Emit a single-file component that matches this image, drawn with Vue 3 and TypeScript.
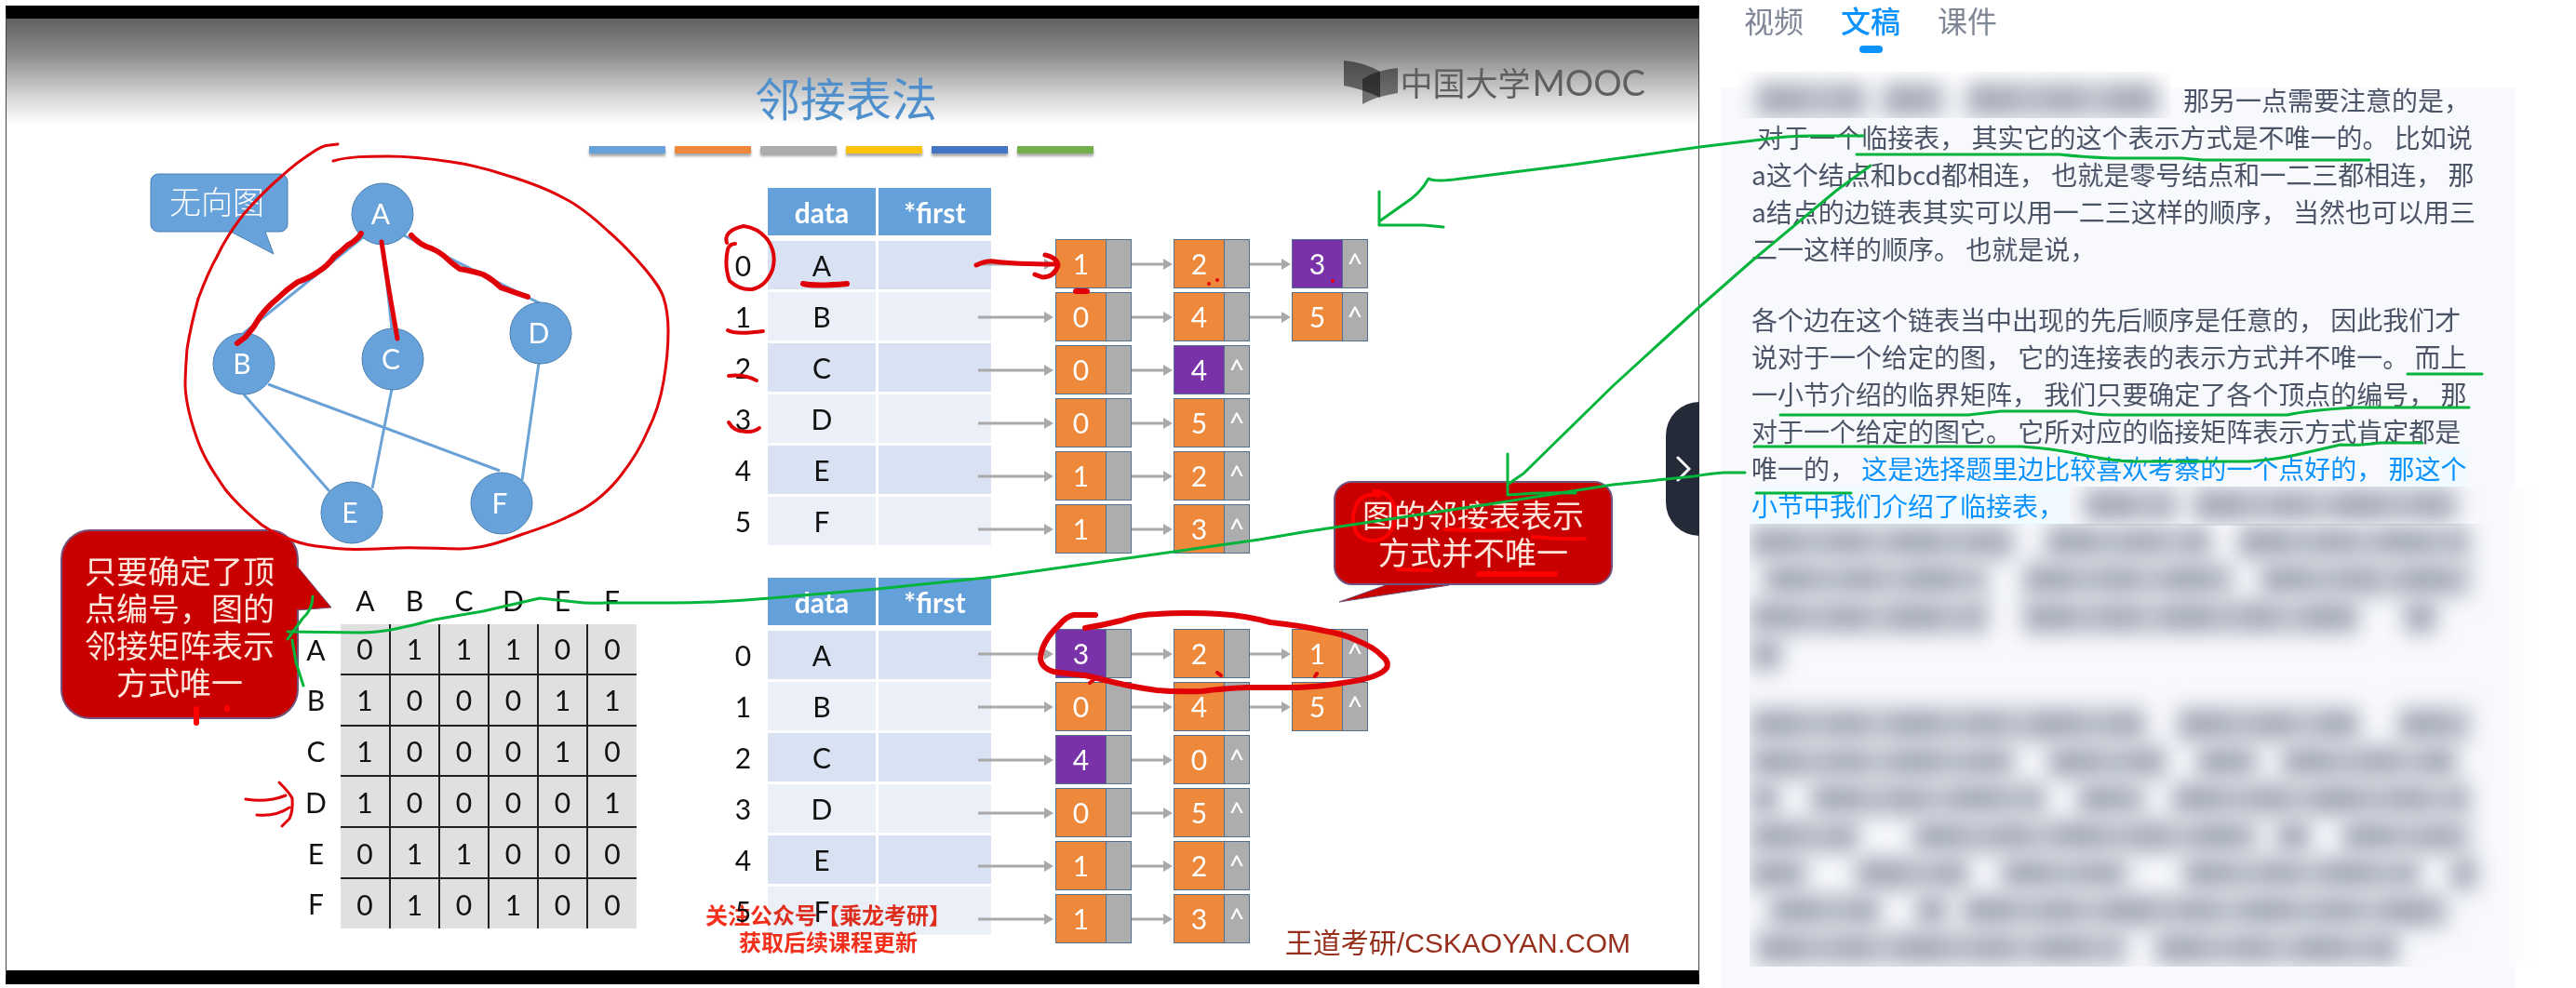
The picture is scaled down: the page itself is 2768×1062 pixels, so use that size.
<script setup lang="ts">
import { ref } from 'vue'

interface ListNode {
  value: number
  accent?: boolean
}
interface VertexRow {
  name: string
  chain: ListNode[]
}
interface GraphNode {
  name: string
  x: number
  y: number
}
type Segment = [gap: number, width: number]

const tabs = ['视频', '文稿', '课件']
const activeTab = ref('文稿')
const collapsed = ref(false)

const stripes = ['blue', 'orange', 'gray', 'yellow', 'navy', 'green']

const graphNodes: GraphNode[] = [
  { name: 'A', x: 404, y: 65 },
  { name: 'B', x: 255, y: 226 },
  { name: 'C', x: 415, y: 221 },
  { name: 'D', x: 574, y: 193 },
  { name: 'E', x: 371, y: 386 },
  { name: 'F', x: 532, y: 376 },
]
const graphEdges = [
  'M383 90 255 193', 'M404 97 414 188', 'M427 88 573 161', 'M255 259 347 363',
  'M281 248 530 341', 'M414 253 393 360', 'M572 225 554 351',
]

const vertices = ['A', 'B', 'C', 'D', 'E', 'F']
const matrix = [
  [0, 1, 1, 1, 0, 0],
  [1, 0, 0, 0, 1, 1],
  [1, 0, 0, 0, 1, 0],
  [1, 0, 0, 0, 0, 1],
  [0, 1, 1, 0, 0, 0],
  [0, 1, 0, 1, 0, 0],
]

const lists: VertexRow[][] = [
  [
    { name: 'A', chain: [{ value: 1 }, { value: 2 }, { value: 3, accent: true }] },
    { name: 'B', chain: [{ value: 0 }, { value: 4 }, { value: 5 }] },
    { name: 'C', chain: [{ value: 0 }, { value: 4, accent: true }] },
    { name: 'D', chain: [{ value: 0 }, { value: 5 }] },
    { name: 'E', chain: [{ value: 1 }, { value: 2 }] },
    { name: 'F', chain: [{ value: 1 }, { value: 3 }] },
  ],
  [
    { name: 'A', chain: [{ value: 3, accent: true }, { value: 2 }, { value: 1 }] },
    { name: 'B', chain: [{ value: 0 }, { value: 4 }, { value: 5 }] },
    { name: 'C', chain: [{ value: 4, accent: true }, { value: 0 }] },
    { name: 'D', chain: [{ value: 0 }, { value: 5 }] },
    { name: 'E', chain: [{ value: 1 }, { value: 2 }] },
    { name: 'F', chain: [{ value: 1 }, { value: 3 }] },
  ],
]

// Obscured transcript lines, stored as gap and width of each run of words.
const maskedHead: Segment[] = [[24, 112], [24, 60], [30, 200]]
const maskedTail: Segment[] = [[18, 94], [24, 278]]
const maskedParagraphs: Segment[][][] = [
  [
    [[2, 278], [39, 171], [36, 243]],
    [[17, 234], [44, 219], [36, 219]],
    [[2, 249], [44, 355], [54, 29]],
    [[2, 27]],
  ],
  [
    [[2, 418], [41, 189], [48, 71]],
    [[2, 278], [42, 121], [39, 59], [32, 181]],
    [[2, 24], [41, 246], [41, 66], [35, 314]],
    [[2, 110], [65, 364], [26, 30], [41, 131]],
    [[2, 54], [59, 115], [42, 130], [65, 248], [39, 23]],
    [[23, 112], [45, 27], [23, 515]],
    [[8, 391], [38, 255]],
  ],
]
const segStyle = (s: Segment) => ({ marginLeft: s[0] + 'px', width: s[1] + 'px' })
</script>

<template>
  <div class="page">
    <main class="slide">
      <header class="slide-head">
        <h1>邻接表法</h1>
        <div class="logo">
          <svg width="58" height="48" viewBox="0 0 58 48" aria-hidden="true">
            <path d="M0 0Q22 2 39 12V40Q22 31 0 27Z" fill="#000" fill-opacity=".5" />
            <path d="M58 8Q36 10 20 20V47Q36 38 58 35Z" fill="#000" fill-opacity=".48" />
          </svg>
          <span class="logo-cn">中国大学</span><span class="logo-en">MOOC</span>
        </div>
      </header>

      <div class="stripes">
        <i v-for="s in stripes" :key="s" :class="s"></i>
      </div>

      <div class="slide-body">
        <section class="left">
          <div class="graph">
            <svg width="760" height="404" aria-label="无向图">
              <path class="tag" d="M163 22H294a8 8 0 0 1 8 8V76a8 8 0 0 1-8 8H278L287 108 241 84H163a8 8 0 0 1-8-8V30a8 8 0 0 1 8-8Z" />
              <text class="tag-text" x="226" y="65">无向图</text>
              <path v-for="e in graphEdges" :key="e" class="edge" :d="e" />
              <g v-for="n in graphNodes" :key="n.name">
                <circle class="vertex" :cx="n.x" :cy="n.y" r="33" />
                <text class="vertex-text" :x="n.x - 2" :y="n.y + 11">{{ n.name }}</text>
              </g>
            </svg>
          </div>
          <div class="matrix-row">
            <p class="callout callout-left">
              <svg width="40" height="60" aria-hidden="true"><path d="M0 4 38 50 0 53" /></svg>
              只要确定了顶<br>点编号，图的<br>邻接矩阵表示<br>方式唯一
            </p>
            <table class="matrix">
              <thead>
                <tr><td></td><th v-for="v in vertices" :key="v" scope="col">{{ v }}</th></tr>
              </thead>
              <tbody>
                <tr v-for="(row, r) in matrix" :key="r">
                  <th scope="row">{{ vertices[r] }}</th>
                  <td v-for="(n, c) in row" :key="c">{{ n }}</td>
                </tr>
              </tbody>
            </table>
          </div>
        </section>

        <section class="middle">
          <div v-for="(list, l) in lists" :key="l" class="adjacency">
            <table class="heads">
              <thead>
                <tr><td class="blank"></td><th scope="col">data</th><th scope="col">*first</th></tr>
              </thead>
              <tbody>
                <tr v-for="(row, i) in list" :key="row.name">
                  <th scope="row">{{ i }}</th>
                  <td class="data">{{ row.name }}</td>
                  <td class="first"></td>
                </tr>
              </tbody>
            </table>
            <ul class="chains">
              <li v-for="row in list" :key="row.name">
                <template v-for="(n, k) in row.chain" :key="k">
                  <svg :width="k ? 45 : 87" height="12" aria-hidden="true">
                    <path v-if="k" d="M0 6H36" class="line" />
                    <path v-else d="M4 6H76" class="line" />
                    <path :d="k ? 'M34 0 44 6 34 12Z' : 'M75 0 85 6 75 12Z'" class="head" />
                  </svg>
                  <span class="cell" :class="{ accent: n.accent }">
                    <b>{{ n.value }}</b><i>{{ k === row.chain.length - 1 ? '^' : '' }}</i>
                  </span>
                </template>
              </li>
            </ul>
          </div>
        </section>
      </div>

      <p class="callout callout-right">
        <svg width="130" height="24" aria-hidden="true"><path d="M54 2 4 20 122 2" /></svg>
        图的邻接表表示<br>方式并不唯一
      </p>
      <p class="watermark">关注公众号【乘龙考研】<br>获取后续课程更新</p>
      <p class="brand">王道考研/CSKAOYAN.COM</p>

      <button class="toggle" type="button" aria-label="收起侧栏" :aria-expanded="!collapsed" @click="collapsed = !collapsed">
        <svg width="16" height="28" viewBox="0 0 16 28"><path d="M2 2 14 14 2 26" /></svg>
      </button>
    </main>

    <aside class="side">
      <nav class="tabs" role="tablist">
        <button v-for="t in tabs" :key="t" type="button" role="tab" :aria-selected="t === activeTab" :class="{ active: t === activeTab }" @click="activeTab = t">{{ t }}</button>
      </nav>
      <article class="transcript">
        <div class="line-row">
          <div class="mask mask-head" aria-hidden="true">
            <div class="mask-line"><i v-for="(s, i) in maskedHead" :key="i" :style="segStyle(s)"></i></div>
          </div>
          <span>那另一点需要注意的是，</span>
        </div>
        <p>&nbsp;对于一个临接表， 其实它的这个表示方式是不唯一的。 比如说<br>a这个结点和bcd都相连， 也就是零号结点和一二三都相连， 那<br>a结点的边链表其实可以用一二三这样的顺序， 当然也可以用三<br>二一这样的顺序。 也就是说，</p>
        <p class="second">各个边在这个链表当中出现的先后顺序是任意的， 因此我们才<br>说对于一个给定的图， 它的连接表的表示方式并不唯一。 而上<br>一小节介绍的临界矩阵， 我们只要确定了各个顶点的编号， 那<br>对于一个给定的图它。 它所对应的临接矩阵表示方式肯定都是<br>唯一的， <span class="spoken">这是选择题里边比较喜欢考察的一个点好的， <mark>那这个</mark></span></p>
        <div class="line-row">
          <mark class="current">小节中我们介绍了临接表，</mark>
          <div class="mask mask-tail" aria-hidden="true">
            <div class="mask-line"><i v-for="(s, i) in maskedTail" :key="i" :style="segStyle(s)"></i></div>
          </div>
        </div>
        <div class="mask mask-rest" aria-hidden="true">
          <div v-for="(p, i) in maskedParagraphs" :key="i" class="mask-par">
            <div v-for="(row, r) in p" :key="r" class="mask-line">
              <i v-for="(s, k) in row" :key="k" :style="segStyle(s)"></i>
            </div>
          </div>
        </div>
      </article>
    </aside>

    <!-- Lecturer's red pen -->
    <svg class="ink red" aria-hidden="true">
      <path d="M358 173C375 168 395 168 417 168C445 168 465 171 485 174C506 177 525 182 543 188C566 195 588 203 606 213C624 222 639 235 654 249C668 261 681 275 693 289C702 300 710 310 713 320C717 332 718 344 718 356C718 375 716 393 713 410C710 429 704 447 696 463C688 482 677 499 664 515C650 532 632 546 611 555C596 563 580 568 562 574C540 582 518 590 494 590C472 590 450 588 427 589C400 590 374 592 349 588C337 587 326 585 315 581C303 577 291 571 281 564C266 552 253 540 242 526C231 510 220 494 213 475C206 456 200 436 199 415C199 401 200 388 201 375C204 356 208 339 213 321C219 305 225 290 233 276C241 259 251 244 262 230C275 215 289 201 303 189C313 180 323 172 334 165C341 160 348 156 354 156L363 155" class="thin" />
      <path d="M388 251Q384 258 373 264Q367 270 359 276Q352 286 342 292Q332 299 320 303Q308 311 298 321Q287 330 279 341Q273 352 264 362L255 369" class="thick" />
      <path d="M410 260 417 306 427 364" class="mid" />
      <path d="M442 253Q449 261 458 265Q468 268 477 275Q485 283 494 289Q506 291 519 295Q529 300 538 309Q552 314 567 319" class="thick" />
      <path d="M211 762V777M244 761V762" class="thick bright" />
      <path d="M264 859Q287 863 307 855M276 876Q296 878 311 868M300 841Q311 852 314 858Q315 872 311 880L303 888" class="thin" />
      <path d="M781 261Q777 248 799 243Q815 245 825 258Q835 273 830 290Q823 308 808 311Q795 312 784 302Q778 286 782 268Q784 262 790 262" />
      <path d="M863 305Q876 308 910 305" class="thick" />
      <path d="M1049 285Q1060 280 1068 281Q1090 284 1134 284M1123 274Q1136 277 1137 285Q1133 298 1120 298L1112 295" class="mid" />
      <path d="M782 355Q790 360 820 356M783 404Q800 402 813 409M783 454Q789 465 804 464Q811 464 816 460" />
      <path d="M1156 313H1168" class="thick" />
      <path d="M1299 305V305M1308 301V301M1432 302V302M1308 723 1312 726M1413 727 1415 724M1171 734 1175 731" />
      <path d="M1166 675Q1185 672 1205 667Q1225 660 1243 660Q1280 658 1311 660Q1340 662 1365 669Q1395 672 1423 678Q1445 682 1457 688Q1477 696 1485 705Q1493 711 1490 718Q1482 729 1443 734Q1420 738 1395 739H1340Q1313 740 1292 743Q1268 744 1243 742Q1220 739 1195 733Q1180 729 1166 726Q1145 724 1132 722Q1119 718 1118 708Q1119 690 1137 673Q1146 662 1154 661L1177 661" class="thick" />
      <g class="bright">
        <path d="M1476 528C1498 528 1500 548 1499 558C1496 578 1482 582 1472 581C1455 580 1452 562 1455 549C1459 535 1468 529 1482 533" />
        <path d="M1553 569Q1590 571 1622 569M1647 577Q1675 580 1703 579M1502 612 1538 613" />
        <path d="M1589 617H1671" class="thick" />
      </g>
    </svg>

    <!-- Green notes that tie the transcript to the slide -->
    <svg class="ink green" aria-hidden="true">
      <path d="M1482 206V242H1530L1551 244M1482 238 1516 214Q1528 205 1535 192Q1542 196 1570 192L1690 177 1826 158 1893 150Q1920 146 1947 146H2002" />
      <path d="M2010 178 1973 205 1883 280 1826 330 1733 415 1637 509 1621 520M1620 488V532Q1655 529 1693 530" />
      <path d="M1875 508H1853Q1838 509 1820 512L1733 521 1613 540 1400 572 1353 580 1069 620 943 633 827 643Q770 648 720 648L651 648Q632 649 618 647L580 643 519 657 467 666Q445 672 425 676Q405 680 387 680L309 679M336 641Q336 655 325 665L309 687M314 688 318 712 326 737" />
      <path d="M1995 166H2213Q2240 169 2270 170H2345L2367 172H2546M2587 402H2667M1913 446H2115L2150 442H2232Q2250 446 2270 446H2458Q2480 441 2530 438H2653M1885 480H2172Q2205 482 2233 488T2287 496H2417Q2445 494 2467 489T2515 478Q2535 479 2558 476H2603M1887 530H1989" />
    </svg>
  </div>
</template>

<style>
body {
  margin: 0;
  background: #fff;
}
</style>

<style scoped>
.page {
  position: relative;
  display: grid;
  grid-template-columns: minmax(0, 1820fr) minmax(0, 942fr);
  min-height: 100vh;
  padding-left: 6px;
  box-sizing: border-box;
  overflow: hidden;
  font-family: Lato, "Noto Sans CJK SC", sans-serif;
}
h1, p, ul {
  margin: 0;
  padding: 0;
}
i {
  font-style: normal;
}

.slide {
  position: relative;
  margin: 6px 0 4px;
  border: 1px solid #444;
  border-top: 14px solid #000;
  border-bottom: 15px solid #000;
  box-sizing: border-box;
  color: #111;
  font-size: 30px;
}
.slide-head {
  display: grid;
  grid-template-columns: 1fr auto 1fr;
  align-items: center;
  height: 114px;
  padding-right: 14px;
  background: linear-gradient(#606060, #8e8e8e 35%, #d8d8d8 75%, #fff);
}
.slide-head h1 {
  grid-column: 2;
  padding-top: 62px;
  padding-bottom: 8px;
  color: #4f8fcb;
  font: 400 49px/42px "Noto Sans CJK SC", sans-serif;
}
.logo {
  display: flex;
  align-items: center;
  justify-self: end;
  gap: 2px;
  padding-right: 43px;
  color: #5f5f5f;
}
.logo svg {
  margin-top: 24px;
}
.logo span {
  line-height: 48px;
  margin-top: 22px;
}
.logo-cn {
  font-family: "Noto Sans CJK SC", sans-serif;
  font-size: 35px;
}
.logo-en {
  font-size: 38px;
}

.stripes {
  display: flex;
  justify-content: center;
  gap: 10px;
  padding: 23px 24px 0 0;
}
.stripes i {
  width: 82px;
  height: 8px;
  box-shadow: 0 3px 3px rgba(0, 0, 0, .35);
}
.blue { background: #67a2da; }
.orange { background: #ee883b; }
.gray { background: #adadad; }
.yellow { background: #fdc30c; }
.navy { background: #4474c4; }
.green { background: #73b04b; }

.slide-body {
  display: flex;
}
.left {
  flex: 0 0 765px;
}
.graph {
  height: 404px;
}
.graph svg {
  display: block;
  overflow: visible;
}
.tag, .vertex {
  fill: #67a2da;
  stroke: #4a7fb0;
  stroke-width: 1;
}
.tag-text, .vertex-text {
  fill: #fff;
  text-anchor: middle;
}
.tag-text {
  font: 300 34px "Noto Sans CJK SC", sans-serif;
}
.vertex-text {
  font-size: 30px;
}
.edge {
  fill: none;
  stroke: #6aa2d8;
  stroke-width: 3;
}
.matrix-row {
  display: flex;
  align-items: flex-start;
  padding-left: 58px;
}
.callout {
  box-sizing: border-box;
  background: #c90000;
  border: 2px solid #70527c;
  color: #ffe6dc;
  font: 400 34px/40px "Noto Sans CJK SC", sans-serif;
  text-align: center;
  white-space: nowrap;
}
.callout svg {
  position: absolute;
  overflow: visible;
}
.callout path {
  fill: #c90000;
  stroke: #70527c;
  stroke-width: 1;
}
.callout-left {
  position: relative;
  width: 256px;
  height: 204px;
  padding: 22px 0;
  border-radius: 32px;
}
.callout-left svg {
  left: 251px;
  top: 32px;
}
.matrix {
  height: 379px;
  margin-top: 50px;
  border-collapse: collapse;
  line-height: 36px;
}
.matrix th, .matrix td {
  width: 53px;
  padding: 0;
  box-sizing: border-box;
  font-weight: 400;
  text-align: center;
}
.matrix tr > :first-child {
  width: 45px;
  padding-right: 8px;
}
.matrix thead tr {
  height: 52px;
}
.matrix tbody td {
  border: 2px solid #222;
  background: #e0e0e0;
}
.matrix tbody td:nth-child(2) { border-left: 0; }
.matrix tbody td:last-child { border-right: 0; }
.matrix tbody tr:first-child td { border-top: 0; }
.matrix tbody tr:last-child td { border-bottom: 0; }

.middle {
  display: flex;
  flex-direction: column;
  gap: 23px;
  padding-top: 34px;
}
.adjacency {
  display: flex;
  align-items: flex-start;
}
.heads {
  table-layout: fixed;
  width: 296px;
  border-spacing: 3px;
  line-height: 36px;
}
.heads th, .heads td {
  height: 52px;
  padding: 0;
  box-sizing: border-box;
  text-align: center;
}
.heads thead th {
  height: 54px;
  border-bottom: 3px solid #fff;
  background: #64a0da;
  color: #fff;
  font-weight: 700;
}
.heads .blank {
  width: 47px;
}
.heads thead th:nth-child(2) {
  width: 116px;
}
.heads tbody th {
  font-weight: 400;
}
.heads tbody td {
  background: #eaeff8;
}
.heads tbody tr:nth-child(odd) td {
  background: #d8e2f2;
}
.chains {
  display: flex;
  flex-direction: column;
  gap: 4px;
  margin: 58px 0 0 -21px;
  list-style: none;
}
.chains li {
  display: flex;
  align-items: center;
  height: 53px;
}
.line {
  stroke: #a9a9a9;
  stroke-width: 3;
}
.head {
  fill: #a9a9a9;
}
.cell {
  display: flex;
  width: 82px;
  height: 53px;
  border: 1px solid #53708f;
  box-sizing: border-box;
  color: #fff;
  line-height: 50px;
  text-align: center;
}
.cell b {
  flex: 1;
  background: #ee883b;
  font-weight: 400;
}
.cell.accent b {
  background: #7a32a8;
}
.cell i {
  width: 26px;
  border-left: 1px solid #53708f;
  background: #adadad;
}

.callout-right {
  position: absolute;
  left: 1426px;
  top: 497px;
  width: 300px;
  height: 112px;
  padding: 14px 0;
  border-radius: 20px;
}
.callout-right svg {
  left: 0;
  top: 108px;
}
.watermark {
  position: absolute;
  left: 742px;
  bottom: 17px;
  width: 282px;
  color: #f2301c;
  font: 700 24px/29px "Noto Sans CJK SC", sans-serif;
  text-align: center;
  white-space: nowrap;
  mix-blend-mode: multiply;
}
.brand {
  position: absolute;
  right: 73px;
  bottom: 9px;
  color: #96301c;
  font: 30px/40px "Liberation Sans", "Noto Sans CJK SC", sans-serif;
}
.toggle {
  position: absolute;
  right: -1px;
  top: 412px;
  display: flex;
  align-items: center;
  justify-content: center;
  width: 36px;
  height: 144px;
  padding: 0 0 0 2px;
  border: 0;
  border-radius: 36px 0 0 36px;
  background: #242a38;
  cursor: pointer;
}
.toggle path {
  fill: none;
  stroke: #fff;
  stroke-width: 3;
  stroke-linecap: round;
}

.side {
  display: flex;
  flex-direction: column;
  padding: 0 66px 0 24px;
  font-family: "Noto Sans CJK SC", sans-serif;
}
.tabs {
  display: flex;
  gap: 40px;
  height: 94px;
  padding-left: 24px;
}
.tabs button {
  position: relative;
  height: 42px;
  padding: 0;
  border: 0;
  background: none;
  color: #7f8796;
  font: 400 32px/42px "Noto Sans CJK SC", sans-serif;
  cursor: pointer;
}
.tabs .active {
  color: #0a93ff;
  font-weight: 500;
}
.tabs .active::after {
  content: "";
  position: absolute;
  left: 20px;
  top: 49px;
  width: 25px;
  height: 8px;
  border-radius: 4px;
  background: #0a93ff;
}
.transcript {
  flex: 1;
  padding: 0 32px;
  background: #f8f9fd;
  color: #4b5567;
  font-size: 28px;
  line-height: 40px;
  white-space: nowrap;
}
.transcript .second {
  margin-top: 36px;
}
.line-row {
  display: flex;
}
.line-row:first-child {
  margin-top: -7px;
}
.spoken, mark {
  color: #0a93ff;
}
mark {
  background: #f0faff;
}
.current {
  flex: 0 0 342px;
  height: 42px;
}
.mask {
  position: relative;
  overflow: hidden;
}
.mask-line {
  display: flex;
  align-items: center;
  height: 40px;
  filter: blur(11px);
}
.mask-line i {
  flex: none;
  height: 30px;
  background: repeating-linear-gradient(90deg, #a6abb9 0 48px, #b6bbc6 48px 84px, #a9aebb 84px 120px, #bcc1cb 120px 150px);
  box-shadow: 0 0 0 4px #c3c7d1;
}
.mask-head {
  flex: 0 0 466px;
  height: 40px;
  margin: -10px 14px 0 -16px;
  padding-top: 10px;
  background: linear-gradient(#fff 10%, #f8f9fd 70%);
}
.mask-tail {
  flex: 1;
  height: 42px;
  margin-right: -52px;
}
.mask-rest {
  margin: -2px -52px 0 -2px;
  padding-left: 2px;
}
.mask-par + .mask-par {
  margin-top: 36px;
}
.mask-rest::after,
.mask-tail::after {
  content: "";
  position: absolute;
  right: 0;
  top: 0;
  bottom: 0;
  width: 40px;
  background: linear-gradient(90deg, #f8f9fd, #fff);
}

.ink {
  position: absolute;
  left: 0;
  top: 0;
  width: 100%;
  height: 100%;
  fill: none;
  stroke-linecap: round;
  stroke-linejoin: round;
  pointer-events: none;
}
.ink.red {
  stroke: #e00008;
  stroke-width: 4;
}
.ink.green {
  background: none;
  stroke: #00b43c;
  stroke-width: 3;
}
.thin { stroke-width: 3; }
.mid { stroke-width: 5; }
.thick { stroke-width: 6; }
.bright { stroke: #ff0000; }
</style>
